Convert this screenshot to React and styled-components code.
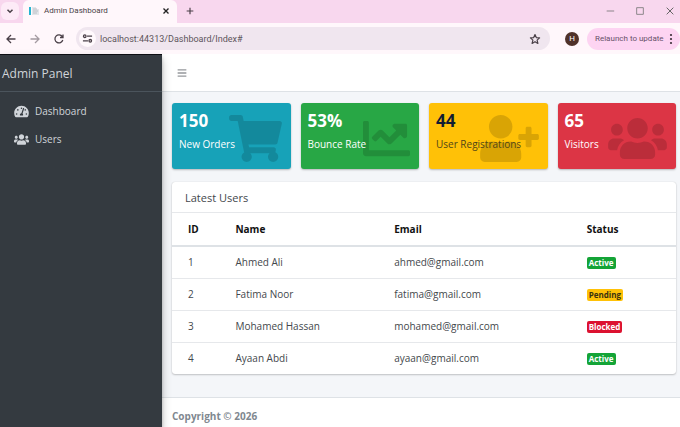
import styled, { createGlobalStyle } from "styled-components";
import { FaBars, FaChartLine, FaShoppingCart, FaTachometerAlt, FaUserPlus, FaUsers } from "react-icons/fa";

const boxes = [
    { value: "150", label: "New Orders", color: "#17a2b8", Icon: FaShoppingCart, iconWidth: 53 },
    { value: "53%", label: "Bounce Rate", color: "#28a745", Icon: FaChartLine, iconWidth: 47 },
    { value: "44", label: "User Registrations", color: "#ffc107", dark: true, Icon: FaUserPlus, iconWidth: 59 },
    { value: "65", label: "Visitors", color: "#dc3545", Icon: FaUsers, iconWidth: 59 },
];

const users = [
    { id: 1, name: "Ahmed Ali", email: "ahmed@gmail.com", status: "Active" },
    { id: 2, name: "Fatima Noor", email: "fatima@gmail.com", status: "Pending" },
    { id: 3, name: "Mohamed Hassan", email: "mohamed@gmail.com", status: "Blocked" },
    { id: 4, name: "Ayaan Abdi", email: "ayaan@gmail.com", status: "Active" },
];

const statusColors = { Active: "#14a437", Pending: "#ffc107", Blocked: "#dc1230" };

function Glyph({ size = 12, stroke = "#4a4048", width = 1.3, children }) {
    return (
        <svg width={size} height={size} viewBox="0 0 12 12" fill="none" stroke={stroke} strokeWidth={width} aria-hidden="true">
            {children}
        </svg>
    )
}

function Browser() {
    return (
        <BrowserBar>
            <TabStrip>
                <TabSearch aria-label="Search tabs">
                    <Glyph size={10} width={1.8}><path d="M3 4.5l3 3 3-3" /></Glyph>
                </TabSearch>
                <Tab>
                    <svg width="12" height="12" viewBox="0 0 12 12" aria-hidden="true">
                        <path d="M1 2h2v8H1z" fill="#25b5d0" />
                        <path d="M4 2h4v8H4zM8 4h3v6H8z" fill="#e3e5e9" />
                        <path d="M5 4h4M5 6h5M5 8h4" stroke="#bcc1c7" strokeWidth="1" />
                    </svg>
                    <TabTitle>Admin Dashboard</TabTitle>
                    <ToolButton aria-label="Close tab">
                        <Glyph size={10} stroke="#222" width={1.6}><path d="M3 3l6 6M9 3l-6 6" /></Glyph>
                    </ToolButton>
                </Tab>
                <NewTab aria-label="New tab">
                    <Glyph size={10} width={1.4}><path d="M6 2v8M2 6h8" /></Glyph>
                </NewTab>
                <WindowButtons>
                    <ToolButton aria-label="Minimize"><Glyph size={10} stroke="#777" width={1}><path d="M2 6h9" /></Glyph></ToolButton>
                    <ToolButton aria-label="Maximize"><Glyph size={10} stroke="#777" width={1}><path d="M2 2h8v8H2z" /></Glyph></ToolButton>
                    <ToolButton aria-label="Close"><Glyph size={10} stroke="#666" width={1.2}><path d="M2 2l8 8M10 2l-8 8" /></Glyph></ToolButton>
                </WindowButtons>
            </TabStrip>
            <Toolbar>
                <NavButtons>
                    <ToolButton aria-label="Back"><Glyph><path d="M10.5 6H2M6 2L2 6l4 4" /></Glyph></ToolButton>
                    <ToolButton aria-label="Forward"><Glyph stroke="#a49ba1"><path d="M1.5 6H10M6 2l4 4-4 4" /></Glyph></ToolButton>
                    <ToolButton aria-label="Reload">
                        <Glyph><path d="M9.8 7A4 4 0 1 1 9.3 3.7M10 1.5v3H7" /></Glyph>
                    </ToolButton>
                </NavButtons>
                <AddressBar>
                    <SiteInfo aria-label="Site information">
                        <Glyph size={11} width={1.4}>
                            <path d="M5.5 3.5H11M1 8.5h5.5" />
                            <circle cx="3" cy="3.5" r="1.4" />
                            <circle cx="9" cy="8.5" r="1.4" />
                        </Glyph>
                    </SiteInfo>
                    <Address aria-label="Address" defaultValue="localhost:44313/Dashboard/Index#" />
                    <ToolButton aria-label="Bookmark">
                        <Glyph size={12} width={1.2}><path d="M6 1.5l1.3 3.1 3.3.3-2.5 2.2.8 3.3L6 8.7l-2.9 1.7.8-3.3L1.4 4.9l3.3-.3z" strokeLinejoin="round" /></Glyph>
                    </ToolButton>
                </AddressBar>
                <Avatar aria-label="Profile">H</Avatar>
                <Relaunch>
                    Relaunch to update
                    <svg width="4" height="12" viewBox="0 0 4 12" fill="#3b2f38" aria-hidden="true">
                        <circle cx="2" cy="2" r="1.1" /><circle cx="2" cy="6" r="1.1" /><circle cx="2" cy="10" r="1.1" />
                    </svg>
                </Relaunch>
            </Toolbar>
        </BrowserBar>
    )
}

export default function App() {
    return (
        <Window>
            <GlobalStyle />
            <Browser />
            <Page>
                <Sidebar>
                    <Brand href="#">Admin Panel</Brand>
                    <Menu>
                        <MenuLink href="#"><MenuIcon><FaTachometerAlt /></MenuIcon>Dashboard</MenuLink>
                        <MenuLink href="#"><MenuIcon><FaUsers /></MenuIcon>Users</MenuLink>
                    </Menu>
                </Sidebar>
                <Wrapper>
                    <Navbar>
                        <ToolButton aria-label="Toggle menu"><BarsIcon /></ToolButton>
                    </Navbar>
                    <Content>
                        <BoxRow>
                            {boxes.map(({ value, label, color, dark, Icon, iconWidth }) => (
                                <SmallBox key={label} $color={color} $dark={dark}>
                                    <BoxIcon $width={iconWidth}><Icon /></BoxIcon>
                                    <BoxValue $dark={dark}>{value}</BoxValue>
                                    <BoxLabel>{label}</BoxLabel>
                                </SmallBox>
                            ))}
                        </BoxRow>
                        <Card>
                            <CardTitle>Latest Users</CardTitle>
                            <Table>
                                <colgroup>
                                    <Col $width="11%" /><Col $width="31.5%" /><Col $width="38.2%" /><Col />
                                </colgroup>
                                <thead>
                                    <tr><Th>ID</Th><Th>Name</Th><Th>Email</Th><Th>Status</Th></tr>
                                </thead>
                                <tbody>
                                    {users.map((user) => (
                                        <tr key={user.id}>
                                            <Td>{user.id}</Td>
                                            <Td>{user.name}</Td>
                                            <Td>{user.email}</Td>
                                            <Td><Badge $status={user.status}>{user.status}</Badge></Td>
                                        </tr>
                                    ))}
                                </tbody>
                            </Table>
                        </Card>
                    </Content>
                    <Footer>Copyright © 2026</Footer>
                </Wrapper>
            </Page>
        </Window>
    )
}

const GlobalStyle = createGlobalStyle`
* {
    box-sizing: border-box;
}
body {
    margin: 0;
    font-family: "Open Sans", "Noto Sans", sans-serif;
    font-size: 10px;
    line-height: 16px;
    color: #43474c;
}
button, input {
    font: inherit;
    color: inherit;
    border: none;
    padding: 0;
    background: none;
}
a {
    color: inherit;
    text-decoration: none;
}
`

const Window = styled.div`
display: flex;
flex-direction: column;
height: 100vh;
overflow: hidden;
`

const BrowserBar = styled.header`
font-family: Roboto, "Open Sans", sans-serif;
`

const TabStrip = styled.div`
display: flex;
align-items: center;
height: 23px;
background-color: #f8d7ee;
`

const ToolButton = styled.button`
display: flex;
align-items: center;
justify-content: center;
`

const TabSearch = styled(ToolButton)`
width: 18px;
height: 18px;
margin: 0 4px 2px 1px;
border-radius: 6px;
background-color: #fdebf7;
`

const Tab = styled.div`
display: flex;
align-items: center;
gap: 4px;
width: 154px;
height: 23px;
padding: 0 6px 2px 5px;
border-radius: 6px 6px 0 0;
background-color: #fff7fb;
`

const TabTitle = styled.span`
flex: 1;
font-size: 8px;
color: #4a4348;
`

const NewTab = styled(ToolButton)`
margin: 0 8px 2px;
`

const WindowButtons = styled.div`
display: flex;
gap: 20px;
margin: 0 5px 2px auto;
`

const Toolbar = styled.div`
display: flex;
align-items: center;
height: 31px;
background-color: #fff7fb;
`

const NavButtons = styled.div`
display: flex;
gap: 12px;
padding: 0 11px 0 5px;
`

const AddressBar = styled.div`
display: flex;
align-items: center;
flex: 1;
height: 23px;
padding: 0 9px 0 3px;
border-radius: 12px;
background-color: #f0e6ef;
`

const SiteInfo = styled(ToolButton)`
width: 17px;
height: 17px;
border-radius: 50%;
background-color: #fff9fc;
`

const Address = styled.input`
flex: 1;
min-width: 0;
padding-left: 4px;
font-size: 9px;
color: #5d555b;
outline: none;
`

const Avatar = styled.button`
width: 14px;
height: 14px;
margin: 0 8px 0 15px;
border-radius: 50%;
background-color: #50322a;
color: #fff;
font-size: 8px;
line-height: 14px;
`

const Relaunch = styled.button`
display: flex;
align-items: center;
justify-content: space-between;
width: 93px;
height: 22px;
padding: 0 7px 0 8px;
border-radius: 11px;
background-color: #fdd4f2;
color: #68516a;
font-size: 8px;
white-space: nowrap;
`

const Page = styled.div`
display: flex;
flex: 1;
min-height: 0;
`

const Sidebar = styled.aside`
z-index: 1;
width: 162px;
flex-shrink: 0;
border-top: 1px solid #0d0f14;
background-color: #343a40;
color: #d0d4d9;
box-shadow: 0 5px 9px rgba(0, 0, 0, 0.25), 0 3px 3px rgba(0, 0, 0, 0.2);
`

const Brand = styled.a`
display: block;
height: 37px;
padding-left: 2px;
border-bottom: 1px solid #4b545c;
font-size: 12px;
line-height: 38px;
`

const Menu = styled.nav`
display: flex;
flex-direction: column;
padding: 5px 6px;
`

const MenuLink = styled.a`
display: flex;
align-items: center;
gap: 5px;
height: 28px;
padding-left: 7px;
`

const MenuIcon = styled.span`
display: flex;
justify-content: center;
width: 17px;

svg {
    width: 15px;
    height: 13px;
}
`

const Wrapper = styled.div`
display: flex;
flex-direction: column;
flex: 1;
min-width: 0;
background-color: #f4f6f9;
`

const Navbar = styled.nav`
display: flex;
align-items: center;
height: 38px;
padding-left: 15px;
border-bottom: 1px solid #dee2e6;
background-color: #fff;
`

const BarsIcon = styled(FaBars)`
width: 10px;
height: 10px;
color: #95989c;
`

const Content = styled.main`
flex: 1;
padding: 11px 4px 0 10px;
`

const BoxRow = styled.div`
display: grid;
grid-template-columns: repeat(4, 1fr);
gap: 10px;
`

const SmallBox = styled.section`
position: relative;
height: 66px;
padding: 7px;
border-radius: 3px;
background-color: ${({ $color }) => $color};
color: ${({ $dark }) => ($dark ? "#514617" : "#fff")};
box-shadow: 0 1px 2px rgba(0, 0, 0, 0.25);
`

const BoxIcon = styled.span`
position: absolute;
top: 12px;
right: 9px;
color: rgba(0, 0, 0, 0.15);

svg {
    display: block;
    width: ${({ $width }) => $width}px;
    height: 47px;
}
`

const BoxValue = styled.h3`
position: relative;
margin: 0 0 4px;
color: ${({ $dark }) => ($dark ? "#101c33" : "#fff")};
font-size: 17px;
line-height: 22px;
`

const BoxLabel = styled.p`
position: relative;
margin: 0;
white-space: nowrap;
`

const Card = styled.section`
margin-top: 13px;
border-radius: 3px;
background-color: #fff;
box-shadow: 0 0 1px rgba(0, 0, 0, 0.2), 0 1px 2px rgba(0, 0, 0, 0.2);
`

const CardTitle = styled.h2`
margin: 0;
padding: 8px 13px 6px;
border-bottom: 1px solid #e6e8eb;
font-size: 11px;
font-weight: 400;
`

const Table = styled.table`
width: 100%;
border-collapse: collapse;
table-layout: fixed;
`

const Col = styled.col`
width: ${({ $width }) => $width || "auto"};
`

const Th = styled.th`
height: 33px;
padding: 0 8px;
border-bottom: 2px solid #dee2e6;
color: #111;
text-align: left;

&:first-child {
    padding-left: 16px;
}
`

const Td = styled.td`
height: 32px;
padding: 0 8px;
border-bottom: 1px solid #e6e8eb;

&:first-child {
    padding-left: 16px;
}

tr:last-child > & {
    border-bottom: none;
}
`

const Badge = styled.span`
display: inline-block;
padding: 0 2px;
border-radius: 2px;
background-color: ${({ $status }) => statusColors[$status]};
color: ${({ $status }) => ($status === "Pending" ? "#3b3210" : "#fff")};
font-size: 8px;
font-weight: 700;
line-height: 12px;
`

const Footer = styled.footer`
padding: 10px 10px 3px;
border-top: 1px solid #dee2e6;
background-color: #fff;
color: #7f8890;
font-weight: 700;
`
